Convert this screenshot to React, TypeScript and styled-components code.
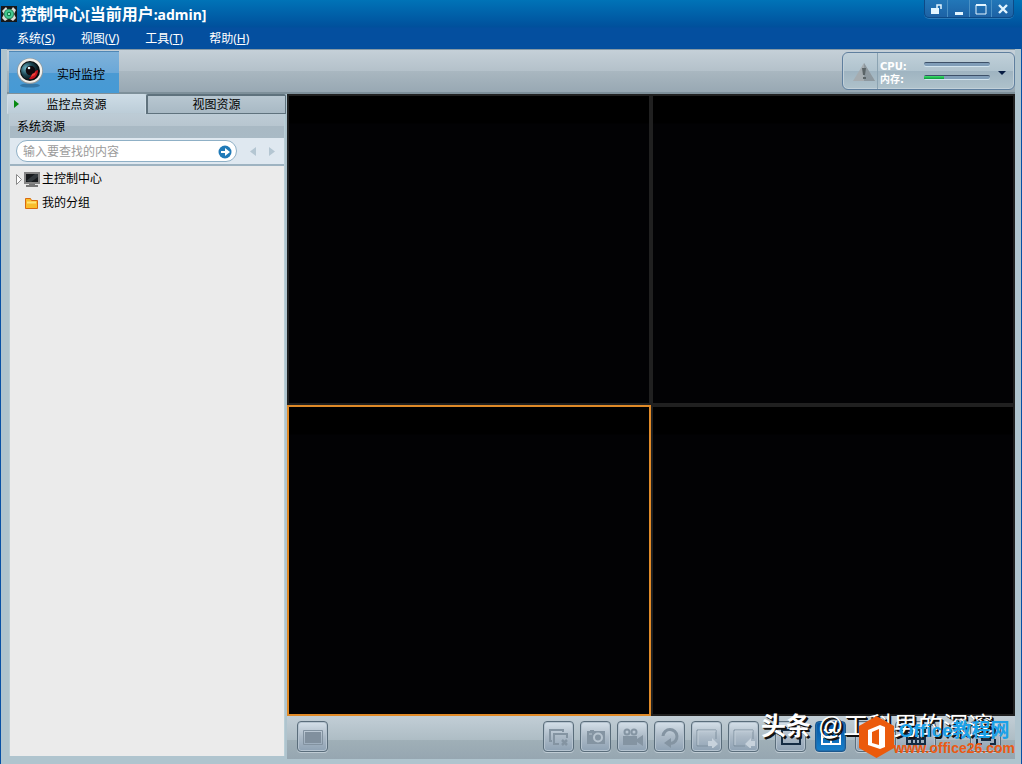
import React, { useState } from "react";
import styled, { createGlobalStyle } from "styled-components";

const GlobalStyle = createGlobalStyle`
  * { box-sizing: border-box; }
  html, body { margin: 0; height: 100%; }
  body {
    font-family: "Noto Sans", "Noto Sans CJK SC", sans-serif;
    font-size: 12px;
    color: #000;
    overflow: hidden;
  }
  button { font: inherit; color: inherit; padding: 0; margin: 0; border: 0; background: none; }
  ul { list-style: none; margin: 0; padding: 0; }
`;

const Shell = styled.div`
  position: relative;
  display: flex;
  flex-direction: column;
  height: 100vh;
  background: #afc4ce;
`;

const Header = styled.header`
  background: linear-gradient(#0073b7 0, #00509c 27px, #044f9f 28px, #044f9f 100%);
  color: #fff;
`;

const TitleRow = styled.div`
  display: flex;
  justify-content: space-between;
  height: 28px;
  padding-right: 8px;
`;

const Title = styled.h1`
  display: flex;
  align-items: center;
  margin: 0;
  padding-left: 1px;
  font-size: 16px;
  line-height: 27px;
  font-weight: 700;
  white-space: nowrap;
  svg { margin-right: 4px; }
`;

const Latin = styled.span`
  font-family: "Noto Sans", sans-serif;
  font-size: 14px;
`;

const WindowButtons = styled.div`
  display: flex;
  height: 18px;
  border: 1px solid #0d4a87;
  border-top: 0;
  border-radius: 0 0 5px 5px;
  background: linear-gradient(#2277b8, #1d62a5);
  box-shadow: 0 1px 0 #2a7ab8;
`;

const WindowButton = styled.button`
  width: 22px;
  height: 17px;
  display: flex;
  align-items: center;
  justify-content: center;
  & + & { border-left: 1px solid #4a90c4; }
`;

const MenuBar = styled.nav`
  display: flex;
  gap: 26px;
  height: 21px;
  padding-left: 17px;
`;

const MenuItem = styled.button`
  line-height: 20px;
  white-space: nowrap;
`;

const Frame = styled.div`
  flex: 1;
  min-height: 0;
  display: flex;
  flex-direction: column;
  border: solid #0650a5;
  border-width: 0 1px;
  padding: 0 6px 5px;
`;

const Ribbon = styled.div`
  display: flex;
  justify-content: space-between;
  height: 45px;
  padding: 1px 0 0 2px;
  border-top: 1px solid #8599a6;
  border-bottom: 2px solid #7e909a;
  background: linear-gradient(#c5d0d8, #b4c1ca 50%, #a9b7c0 51%, #98a8b3);
`;

const RibbonTab = styled.button`
  display: flex;
  align-items: center;
  width: 110px;
  height: 42px;
  padding-left: 7px;
  gap: 13px;
  border-top: 1px solid #4f87b5;
  background: linear-gradient(#7fb2da, #6ba8d8 50%, #4b9ad3 51%, #469ad5);
`;

const RibbonLabel = styled.span`
  padding-top: 2px;
`;

const StatusPanel = styled.section`
  display: flex;
  align-items: stretch;
  width: 173px;
  height: 38px;
  margin-top: 1px;
  border: 1px solid #5f7f9e;
  border-radius: 6px;
  background: linear-gradient(#c0d0d9, #b0c3ce 50%, #9fb4c1 51%, #afc2cb);
  box-shadow: inset 0 0 0 1px #c2d0d9;
`;

const Warning = styled.div`
  display: flex;
  align-items: center;
  justify-content: flex-end;
  width: 35px;
  padding: 3px 2px 0 0;
  border-right: 1px solid #8ba3b2;
`;

const Meters = styled.div`
  display: flex;
  flex-direction: column;
  justify-content: center;
  width: 112px;
  padding: 4px 0 0 2px;
  font: 700 10px/13px "DejaVu Sans", "Noto Sans CJK SC", sans-serif;
  color: #fff;
`;

const MeterRow = styled.div`
  display: flex;
  justify-content: space-between;
  height: 13px;
  white-space: nowrap;
`;

const Track = styled.div`
  width: 66px;
  height: 4px;
  margin-top: 2px;
  border-top: 1px solid #3d5068;
  border-radius: 2px;
  background: #809db8;
  box-shadow: 0 1px 0 #d1e4ef;
`;

const Fill = styled.div`
  height: 3px;
  background: linear-gradient(#40e070, #0a9a38);
`;

const DropButton = styled.button`
  flex: 1;
  display: flex;
  align-items: center;
  justify-content: center;
  padding-top: 4px;
`;

const Main = styled.main`
  flex: 1;
  min-height: 0;
  display: flex;
`;

const Sidebar = styled.aside`
  display: flex;
  flex-direction: column;
  width: 280px;
  flex: none;
`;

const Tabs = styled.div`
  display: flex;
  height: 20px;
  padding-right: 1px;
`;

const Tab = styled.button<{ $active?: boolean }>`
  flex: 1;
  display: flex;
  align-items: center;
  position: relative;
  justify-content: center;
  height: 20px;
  border: 1px solid ${(p) => (p.$active ? "#cfdde6" : "#5f727d")};
  border-width: ${(p) => (p.$active ? "1px" : "2px 1px 1px 2px")};
  border-bottom-color: ${(p) => (p.$active ? "#bccbd5" : "#5f727d")};
  border-radius: 2px 2px 0 0;
  background: ${(p) => (p.$active ? "linear-gradient(#cddce6, #bccdd8)" : "linear-gradient(#b8c7d1, #a8b9c4)")};
  line-height: 17px;
`;

const TabMarker = styled.svg`
  position: absolute;
  left: 6px;
  top: 5px;
`;

const SidePanel = styled.div`
  flex: 1;
  min-height: 0;
  display: flex;
  flex-direction: column;
  margin: 0 2px 3px;
  border: solid #b9ced6;
  border-width: 0 1px;
`;

const PanelTitle = styled.h2`
  margin: 0;
  height: 24px;
  padding-left: 7px;
  font-size: 12px;
  font-weight: 400;
  line-height: 26px;
  background: linear-gradient(#bdccd6, #b8c6d0 50%, #a9b9c4 51%, #a9bac5);
`;

const SearchBar = styled.form`
  display: flex;
  align-items: center;
  height: 28px;
  padding-left: 6px;
  border-bottom: 2px solid #9eb3c1;
  background: #dfe8f0;
`;

const SearchBox = styled.div`
  display: flex;
  align-items: center;
  width: 221px;
  height: 22px;
  margin-right: 6px;
  padding: 2px 4px 0 6px;
  border: 1px solid #8fb0c6;
  border-radius: 11px;
  background: #fff;
  button { display: flex; }
`;

const SearchInput = styled.input`
  flex: 1;
  min-width: 0;
  border: 0;
  padding: 0;
  outline: 0;
  background: transparent;
  font: inherit;
  line-height: 18px;
  &::placeholder { color: #9b9b9b; opacity: 1; }
`;

const StepButton = styled.button`
  display: flex;
  justify-content: center;
  width: 19px;
`;

const Tree = styled.ul`
  flex: 1;
  && { padding: 1px 0 0 6px; }
  background: #ebebeb;
`;

const TreeItem = styled.li`
  display: grid;
  grid-template-columns: 8px 18px 1fr;
  align-items: center;
  height: 24px;
  line-height: 24px;
`;

const Stage = styled.section`
  flex: 1;
  min-width: 0;
  display: flex;
  flex-direction: column;
`;

const Wall = styled.div`
  flex: 1;
  min-height: 0;
  display: grid;
  grid-template: 1fr 1fr / 1fr 1fr;
  gap: 4px;
  padding: 2px;
  background: #202020;
`;

const Screen = styled.div<{ $selected?: boolean }>`
  background: linear-gradient(#000 0, #000 27px, #020204 28px);
  outline: ${(p) => (p.$selected ? "2px solid #e08a28" : "none")};
`;

const Controls = styled.div`
  display: flex;
  justify-content: space-between;
  height: 43px;
  padding: 5px 14px 0 10px;
  background: linear-gradient(#c2ced6, #aebdc5 55%, #9fafb7 57%, #96a6b1);
`;

const ButtonGroup = styled.div<{ $gap: number }>`
  display: flex;
  gap: ${(p) => p.$gap}px;
`;

const FullScreenGroup = styled.div`
  padding-left: 18px;
`;

const ControlButton = styled.button<{ $blue?: boolean; $wide?: boolean }>`
  display: flex;
  align-items: center;
  justify-content: center;
  width: ${(p) => (p.$wide ? 41 : 31)}px;
  height: 31px;
  border: 1px solid ${(p) => (p.$blue ? "#1c588e" : "#5a6d7b")};
  border-radius: 4px;
  background: ${(p) => (p.$blue ? "linear-gradient(#0754a0, #1680cb)" : "linear-gradient(#d5e0e9, #acbac7 50%, #8fa2b4)")};
  box-shadow: 0 1px 0 #c0ccd4, inset 0 0 0 1px ${(p) => (p.$blue ? "#216fae" : "#b5c3cf")};
  color: #8494a2;
`;

const Watermark = styled.div`
  position: absolute;
  right: 5px;
  bottom: 4px;
  width: 256px;
  height: 50px;
  pointer-events: none;
  white-space: nowrap;
`;

const Author = styled.span`
  position: absolute;
  left: 0;
  top: 0;
  font: 400 25px/32px "Liberation Sans", "Noto Sans CJK SC", sans-serif;
  color: #fff;
  text-shadow: 1px 1px 0 #111, 2px 2px 0 #111;
  b { font-weight: 700; }
`;

const BrandLogo = styled.svg`
  position: absolute;
  left: 97px;
  top: 5px;
`;

const Brand = styled.div`
  position: absolute;
  right: 2px;
  top: 10px;
  display: flex;
  flex-direction: column;
  align-items: center;
`;

const BrandName = styled.span`
  font: 700 19px/21px "Liberation Sans", "Noto Sans CJK SC", sans-serif;
  color: #1ba1e8;
`;

const BrandUrl = styled.span`
  font: 700 14px/15px "Liberation Sans", sans-serif;
  color: #eb5a13;
`;

const AppIcon = () => (
  <svg width="16" height="16" viewBox="0 0 16 16">
    <path fill="#171717" d="M0 0h16v16H0z" />
    <path fill="#d9ded8" d="M1 5l4-4 2 3h3l2-3 3 3-2 4 2 4-3 3-3-2H7l-3 2-3-3 2-4z" />
    <circle cx="8" cy="8" r="5.200" fill="#2f8a63" />
    <circle cx="8" cy="8" r="4.200" fill="#43c98f" />
    <circle cx="8" cy="8" r="2.200" fill="#0f7d4c" />
    <circle cx="8" cy="8" r="1" fill="#c9ffe8" />
  </svg>
);

const LensIcon = () => (
  <svg width="28" height="32" viewBox="0 0 28 32">
    <defs>
      <radialGradient id="glass" cx="28%" cy="35%" r="75%">
        <stop offset="0" stopColor="#6fb9c9" />
        <stop offset=".5" stopColor="#1b4451" />
        <stop offset="1" stopColor="#050708" />
      </radialGradient>
    </defs>
    <ellipse cx="14" cy="28.500" rx="10" ry="2" fill="#1d5279" opacity=".5" />
    <circle cx="14" cy="14" r="13" fill="#8d999f" />
    <circle cx="14" cy="13.600" r="12.200" fill="#f3f0ea" />
    <circle cx="14" cy="14" r="10" fill="#080c0d" />
    <circle cx="14" cy="14" r="9" fill="url(#glass)" />
    <path d="M13 22c5 1 9-3 9-9l-3 1-4 5z" fill="#c3121c" />
    <circle cx="14.500" cy="13.500" r="4.800" fill="#10090d" />
    <circle cx="13" cy="11" r="1.300" fill="#e2fbff" />
    <path d="M15 20l4-2 1-3-4 2z" fill="#ef4038" />
  </svg>
);

const WarningIcon = () => (
  <svg width="22" height="20" viewBox="0 0 22 20">
    <path d="M11 0l11 18H0z" fill="#a5acb0" />
    <path d="M11 0l11 18H11z" fill="#8d989f" />
    <path d="M9 5h4l-1 7h-2zM10 14h3v2h-3z" fill="#5b6467" />
  </svg>
);

const Triangle = ({ d, fill, w = 6, h = 9 }: { d: string; fill: string; w?: number; h?: number }) => (
  <svg width={w} height={h}><path d={d} fill={fill} /></svg>
);

const controlIcons: Record<string, React.ReactNode> = {
  layout: (
    <><path d="M1.500 4.500h19v14h-19z" fill="none" stroke="#8292a0" /><path d="M3 6h16v11H3z" fill="#81909e" /></>
  ),
  closeAll: (
    <g fill="none" stroke="currentColor" strokeWidth="2">
      <path d="M4 15H2V4h13v2M11 18H6V8h13v4" /><path d="M14 14l5 5M19 14l-5 5" strokeWidth="2.500" />
    </g>
  ),
  photo: (
    <><path d="M2 5h3V4h4v1h11v13H2z" fill="currentColor" /><circle cx="13" cy="11.500" r="4" fill="none" stroke="#b7c4cf" strokeWidth="2" /><path d="M4 8h3" stroke="#b7c4cf" /></>
  ),
  record: (
    <><path d="M1 10h14v3l6-4v11l-6-4v3H1z" fill="currentColor" /><circle cx="5" cy="6" r="2.500" fill="none" stroke="currentColor" strokeWidth="2" /><circle cx="12" cy="6" r="2.500" fill="none" stroke="currentColor" strokeWidth="2" /></>
  ),
  cycle: (
    <><path d="M4 10a7 7 0 1 1 8 7.500" fill="none" stroke="currentColor" strokeWidth="3" /><path d="M12 12v10l-7-5z" fill="currentColor" /></>
  ),
  next: (
    <><path d="M20 13V4H1v16h11" fill="none" stroke="#7f909f" /><path d="M2 19V5h18" fill="none" stroke="#c2ced8" /><path d="M12 15h4v-3l6 6-6 5v-3h-4z" fill="#c7d2dc" /></>
  ),
  previous: (
    <><path d="M20 13V4H1v16h11" fill="none" stroke="#7f909f" /><path d="M2 19V5h18" fill="none" stroke="#c2ced8" /><path d="M22 15h-4v-3l-6 6 6 5v-3h4z" fill="#c7d2dc" /></>
  ),
  single: <path d="M2 4h18v14H2z" fill="none" stroke="#152c43" strokeWidth="2" />,
  quad: <path d="M2 4h18v14H2zM11 4v14M2 11h18" fill="none" stroke="#fff" strokeWidth="2" />,
  nine: <path d="M2 4h18v14H2zM8 4v14M14 4v14M2 9h18M2 13h18" fill="none" stroke="#152c43" strokeWidth="2" />,
  grid: <path d="M2 4h18v14H2zM7 4v14M11 4v14M15 4v14M2 8h18M2 13h18" fill="none" stroke="#152c43" strokeWidth="2" />,
  full: <path d="M2 8V3h5M15 3h5v5M20 13v5h-5M7 18H2v-5M7 8h8v6H7z" fill="none" stroke="#152c43" strokeWidth="2" />,
};

const Control = ({ icon, label, blue, wide }: { icon: string; label: string; blue?: boolean; wide?: boolean }) => (
  <ControlButton type="button" aria-label={label} $blue={blue} $wide={wide}>
    <svg width="22" height="22" viewBox="0 0 22 22">{controlIcons[icon]}</svg>
  </ControlButton>
);

const Menu = ({ name, hotkey }: { name: string; hotkey: string }) => (
  <MenuItem type="button">{name}(<u>{hotkey}</u>)</MenuItem>
);

const Meter = ({ name, value }: { name: string; value: number }) => (
  <MeterRow>
    {name}
    <Track><Fill style={{ width: `${value}%` }} /></Track>
  </MeterRow>
);

export default function App() {
  const [query, setQuery] = useState("");
  const [selected, setSelected] = useState(2);

  return (
    <Shell>
      <GlobalStyle />
      <Header>
        <TitleRow>
          <Title>
            <AppIcon />控制中心<Latin>[</Latin>当前用户<Latin>:admin]</Latin>
          </Title>
          <WindowButtons>
            <WindowButton type="button" aria-label="锁定">
              <svg width="12" height="12"><path d="M1 5h8v6H1z" fill="#e2f5ff" /><path d="M7 5V2h4v4" fill="none" stroke="#e2f5ff" strokeWidth="1.500" /></svg>
            </WindowButton>
            <WindowButton type="button" aria-label="最小化">
              <svg width="10" height="12"><path d="M1 9h8v3H1z" fill="#e2f5ff" /></svg>
            </WindowButton>
            <WindowButton type="button" aria-label="最大化">
              <svg width="12" height="12"><path d="M1 2h10v9H1z" fill="none" stroke="#e2f5ff" /><path d="M1 2h10" stroke="#e2f5ff" strokeWidth="2" /></svg>
            </WindowButton>
            <WindowButton type="button" aria-label="关闭">
              <svg width="10" height="12"><path d="M1 2l8 8M9 2l-8 8" stroke="#e2f5ff" strokeWidth="2.400" /></svg>
            </WindowButton>
          </WindowButtons>
        </TitleRow>
        <MenuBar>
          <Menu name="系统" hotkey="S" />
          <Menu name="视图" hotkey="V" />
          <Menu name="工具" hotkey="T" />
          <Menu name="帮助" hotkey="H" />
        </MenuBar>
      </Header>

      <Frame>
        <Ribbon>
          <RibbonTab type="button"><LensIcon /><RibbonLabel>实时监控</RibbonLabel></RibbonTab>
          <StatusPanel>
            <Warning><WarningIcon /></Warning>
            <Meters>
              <Meter name="CPU:" value={0} />
              <Meter name="内存:" value={30} />
            </Meters>
            <DropButton type="button" aria-label="展开">
              <Triangle d="M0 0h8L4 4z" fill="#071c43" w={8} h={4} />
            </DropButton>
          </StatusPanel>
        </Ribbon>

        <Main>
          <Sidebar>
            <Tabs>
              <Tab type="button" $active>
                <TabMarker width="5" height="8"><path d="M0 0l5 4-5 4z" fill="#078a12" /></TabMarker>
                监控点资源
              </Tab>
              <Tab type="button">视图资源</Tab>
            </Tabs>
            <SidePanel>
              <PanelTitle>系统资源</PanelTitle>
              <SearchBar onSubmit={(e) => e.preventDefault()}>
                <SearchBox>
                  <SearchInput
                    aria-label="查找资源"
                    placeholder="输入要查找的内容"
                    value={query}
                    onChange={(e) => setQuery(e.target.value)}
                  />
                  <button type="submit" aria-label="查找">
                    <svg width="14" height="14"><circle cx="7" cy="7" r="6.500" fill="#207ab8" /><path d="M3 6h4V3l5 4-5 4V8H3z" fill="#fff" /></svg>
                  </button>
                </SearchBox>
                <StepButton type="button" aria-label="上一个"><Triangle d="M6 0v9L0 4.500z" fill="#b4c6d2" /></StepButton>
                <StepButton type="button" aria-label="下一个"><Triangle d="M0 0v9l6-4.500z" fill="#b4c6d2" /></StepButton>
              </SearchBar>
              <Tree>
                <TreeItem>
                  <svg width="7" height="11"><path d="M.5.5v10l5-5z" fill="#fff" stroke="#8a8a8a" /></svg>
                  <svg width="16" height="15"><path d="M0 0h16v12H0z" fill="#858585" /><path d="M2 2h12v8H2z" fill="#171a1d" /><path d="M2 9l9-7h3v3l-7 5z" fill="#32383c" /><path d="M5 12h6v1h3v2H2v-2h3z" fill="#777" /></svg>
                  主控制中心
                </TreeItem>
                <TreeItem>
                  <span />
                  <svg width="16" height="13"><path d="M1.500 1.500h5l1 2h6v8h-12z" fill="#f9bd2b" stroke="#d9690f" /><path d="M3 5.500h9" fill="none" stroke="#ffe477" strokeWidth="2" /></svg>
                  我的分组
                </TreeItem>
              </Tree>
            </SidePanel>
          </Sidebar>

          <Stage>
            <Wall>
              {[0, 1, 2, 3].map((n) => (
                <Screen key={n} $selected={n === selected} onClick={() => setSelected(n)} />
              ))}
            </Wall>
            <Controls>
              <Control icon="layout" label="窗口" />
              <ButtonGroup $gap={16}>
                <ButtonGroup $gap={6}>
                  <Control icon="closeAll" label="全部关闭" />
                  <Control icon="photo" label="抓图" />
                  <Control icon="record" label="录像" />
                  <Control icon="cycle" label="轮巡" />
                  <Control icon="next" label="下一页" />
                  <Control icon="previous" label="上一页" />
                </ButtonGroup>
                <ButtonGroup $gap={9}>
                  <Control icon="single" label="单画面" />
                  <Control icon="quad" label="四画面" blue />
                  <Control icon="nine" label="九画面" />
                  <Control icon="grid" label="更多画面" wide />
                </ButtonGroup>
                <FullScreenGroup>
                  <Control icon="full" label="全屏" />
                </FullScreenGroup>
              </ButtonGroup>
            </Controls>
          </Stage>
        </Main>
      </Frame>

      <Watermark>
        <Author><b>头条</b> @工科男的深邃</Author>
        <BrandLogo width="37" height="44" viewBox="0 0 37 44">
          <path d="M18.500 1L36 11v22L18.500 43 1 33V11z" fill="#eb5a0c" />
          <path fillRule="evenodd" d="M10 15l12-5 5 2v20l-5 2-12-4zM14 17v11l7 2V14z" fill="#fff" />
        </BrandLogo>
        <Brand>
          <BrandName>Office教程网</BrandName>
          <BrandUrl>www.office26.com</BrandUrl>
        </Brand>
      </Watermark>
    </Shell>
  );
}
